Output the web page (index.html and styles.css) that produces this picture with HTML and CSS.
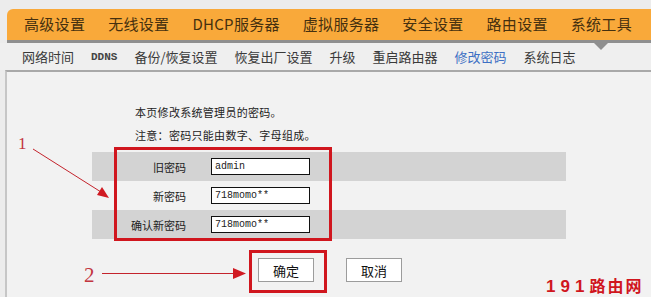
FILE: index.html
```html
<!DOCTYPE html>
<html lang="zh-CN">

<head>
    <meta charset="UTF-8">
    <title>修改密码</title>
    <link rel="stylesheet" href="styles.css">
</head>

<body>
    <div class="page">
        <div class="topnav">
            <span>高级设置</span>
            <span>无线设置</span>
            <span>DHCP服务器</span>
            <span>虚拟服务器</span>
            <span>安全设置</span>
            <span>路由设置</span>
            <span class="current">系统工具</span>
        </div>

        <div class="subnav">
            <span>网络时间</span>
            <span class="latin">DDNS</span>
            <span>备份/恢复设置</span>
            <span>恢复出厂设置</span>
            <span>升级</span>
            <span>重启路由器</span>
            <span class="active">修改密码</span>
            <span>系统日志</span>
        </div>

        <div class="content">
            <div class="intro">
                <p>本页修改系统管理员的密码。</p>
                <p>注意：密码只能由数字、字母组成。</p>
            </div>

            <div class="form">
                <div class="row dark">
                    <label>旧密码</label>
                    <input type="text" value="admin">
                </div>
                <div class="row">
                    <label>新密码</label>
                    <input type="text" value="718momo**">
                </div>
                <div class="row dark">
                    <label>确认新密码</label>
                    <input type="text" value="718momo**">
                </div>
            </div>

            <div class="actions">
                <button type="button">确定</button>
                <button type="button">取消</button>
            </div>
        </div>

        <!-- 标注 -->
        <div class="mark mark-fields"></div>
        <div class="mark mark-ok"></div>
        <span class="num num-1">1</span>
        <span class="num num-2">2</span>
        <svg class="arrows" width="651" height="297" viewBox="0 0 651 297">
            <line x1="33" y1="149" x2="101" y2="192" stroke="#c4232c" stroke-width="1"/>
            <polygon points="109,198 97,195 102,187" fill="#d01a22"/>
            <line x1="102" y1="273.5" x2="234" y2="273.5" stroke="#c4232c" stroke-width="1"/>
            <polygon points="246,273.5 233,268 233,279" fill="#d01a22"/>
        </svg>
        <div class="watermark"><span class="digits">191</span>路由网</div>
    </div>
</body>

</html>
```

FILE: styles.css
```css
:root {
    --orange: #f9a93a;
    --shadow: #8f8f8f;
    --line: #a9a9a9;
    --panel: #f2f2f2;
    --row: #d3d3d3;
    --red: #d0161e;
}

* {
    margin: 0;
    padding: 0;
    box-sizing: border-box;
}

body {
    background-color: #ececec;
    font-family: 'Noto Sans CJK SC', 'Liberation Sans', sans-serif;
    color: #333;
}

.page {
    position: relative;
    width: 651px;
    height: 297px;
    overflow: hidden;
}

/* 顶部导航 */
.topnav {
    position: relative;
    margin: 9px 0 0 7px;
    height: 34px;
    padding: 0 0 3px 17px;
    background-color: var(--orange);
    border-bottom: 3px solid var(--shadow);
    border-radius: 6px 0 0 0;
    display: flex;
    align-items: center;
    gap: 23px;
    font-size: 15px;
    letter-spacing: 0.3px;
    color: #45300f;
    white-space: nowrap;
}

.topnav .current::after {
    content: '';
    position: absolute;
    left: 587px;
    bottom: -10px;
    border-left: 7px solid transparent;
    border-right: 7px solid transparent;
    border-top: 7px solid var(--shadow);
}

/* 子导航 */
.subnav {
    height: 27px;
    padding-left: 22px;
    display: flex;
    align-items: center;
    gap: 17px;
    font-size: 13px;
    color: #3a3a3a;
    background-color: #efefef;
    white-space: nowrap;
}

.subnav .latin {
    font-family: 'Liberation Mono', monospace;
    font-size: 11px;
    font-weight: bold;
    color: #444;
}

.subnav .active {
    color: #3d6fc4;
}

/* 内容区域 */
.content {
    margin-left: 5px;
    height: 227px;
    background-color: var(--panel);
    border-top: 2px solid var(--line);
    border-left: 2px solid #c6c6c6;
}

.intro {
    padding: 29px 0 0 128px;
    font-size: 11px;
    line-height: 23px;
    letter-spacing: 0.3px;
    color: #222;
}

.form {
    margin: 5px 0 0 85px;
    width: 474px;
}

.row {
    height: 29px;
    display: flex;
    align-items: center;
}

.row.dark {
    background-color: var(--row);
}

.row label {
    width: 94px;
    text-align: right;
    font-size: 11px;
    color: #222;
}

.row input {
    margin-left: 25px;
    width: 99px;
    height: 17px;
    padding-left: 3px;
    border: 1px solid #111;
    background-color: #fff;
    font-family: 'Liberation Mono', monospace;
    font-size: 10px;
    color: #222;
}

.actions {
    margin-top: 19px;
    padding-left: 251px;
    display: flex;
    gap: 32px;
}

.actions button {
    width: 56px;
    height: 24px;
    background-color: #fff;
    border: 1px solid #9c9c9c;
    font-family: 'Noto Sans CJK SC', sans-serif;
    font-size: 13px;
    color: #111;
}

/* 标注 */
.mark {
    position: absolute;
    border: 3px solid var(--red);
}

.mark-fields {
    left: 114px;
    top: 147px;
    width: 218px;
    height: 94px;
}

.mark-ok {
    left: 249px;
    top: 250px;
    width: 78px;
    height: 43px;
}

.num {
    position: absolute;
    font-family: 'Liberation Serif', serif;
    color: #c2353f;
    line-height: 1;
}

.num-1 {
    left: 18px;
    top: 135px;
    font-size: 17px;
}

.num-2 {
    left: 84px;
    top: 265px;
    font-size: 21px;
}

.arrows {
    position: absolute;
    left: 0;
    top: 0;
}

.watermark {
    position: absolute;
    left: 546px;
    top: 275px;
    font-size: 16px;
    font-weight: bold;
    letter-spacing: 2px;
    color: var(--red);
    line-height: 20px;
    white-space: nowrap;
}

.watermark .digits {
    font-family: 'Liberation Sans', sans-serif;
    font-size: 17px;
    letter-spacing: 5px;
}
```
